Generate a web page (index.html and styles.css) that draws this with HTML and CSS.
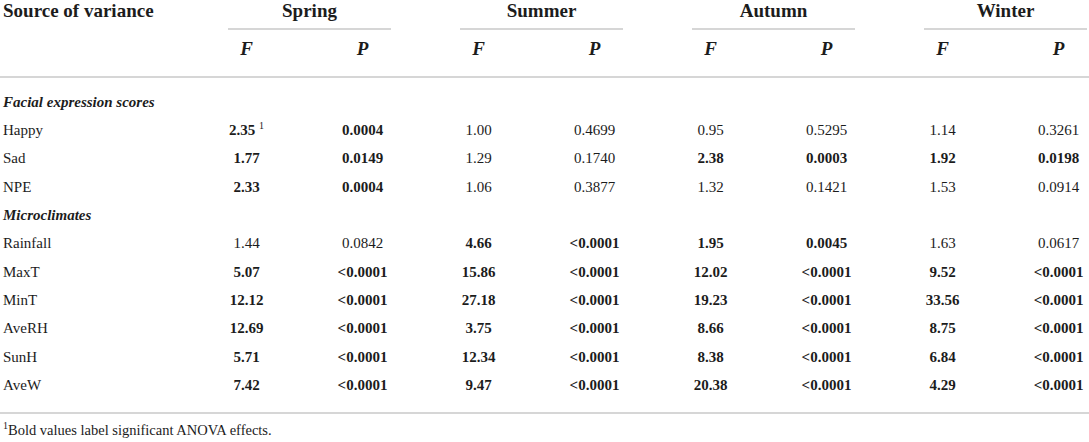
FILE: index.html
```html
<!DOCTYPE html>
<html lang="en">
  <head>
    <meta charset="UTF-8" />
    <meta name="viewport" content="width=device-width, initial-scale=1.0" />
    <title>ANOVA - seasons</title>
    <link rel="stylesheet" href="styles.css">
  </head>
  <body>
    <table class="anova">
      <colgroup>
        <col class="col_src" />
        <col class="col_val" span="8" />
      </colgroup>
      <thead>
        <tr class="season_row">
          <th class="src" rowspan="2">Source of variance</th>
          <th class="season" colspan="2"><div>Spring</div></th>
          <th class="season" colspan="2"><div>Summer</div></th>
          <th class="season" colspan="2"><div>Autumn</div></th>
          <th class="season" colspan="2"><div>Winter</div></th>
        </tr>
        <tr class="stat_row">
          <th>F</th><th>P</th>
          <th>F</th><th>P</th>
          <th>F</th><th>P</th>
          <th>F</th><th>P</th>
        </tr>
      </thead>
      <tbody>
        <tr class="group">
          <td colspan="9">Facial expression scores</td>
        </tr>
        <tr>
          <td>Happy</td>
          <td class="sig">2.35 <sup>1</sup></td><td class="sig">0.0004</td>
          <td>1.00</td><td>0.4699</td>
          <td>0.95</td><td>0.5295</td>
          <td>1.14</td><td>0.3261</td>
        </tr>
        <tr>
          <td>Sad</td>
          <td class="sig">1.77</td><td class="sig">0.0149</td>
          <td>1.29</td><td>0.1740</td>
          <td class="sig">2.38</td><td class="sig">0.0003</td>
          <td class="sig">1.92</td><td class="sig">0.0198</td>
        </tr>
        <tr>
          <td>NPE</td>
          <td class="sig">2.33</td><td class="sig">0.0004</td>
          <td>1.06</td><td>0.3877</td>
          <td>1.32</td><td>0.1421</td>
          <td>1.53</td><td>0.0914</td>
        </tr>
        <tr class="group">
          <td colspan="9">Microclimates</td>
        </tr>
        <tr>
          <td>Rainfall</td>
          <td>1.44</td><td>0.0842</td>
          <td class="sig">4.66</td><td class="sig">&lt;0.0001</td>
          <td class="sig">1.95</td><td class="sig">0.0045</td>
          <td>1.63</td><td>0.0617</td>
        </tr>
        <tr class="sig_row">
          <td>MaxT</td>
          <td>5.07</td><td>&lt;0.0001</td>
          <td>15.86</td><td>&lt;0.0001</td>
          <td>12.02</td><td>&lt;0.0001</td>
          <td>9.52</td><td>&lt;0.0001</td>
        </tr>
        <tr class="sig_row">
          <td>MinT</td>
          <td>12.12</td><td>&lt;0.0001</td>
          <td>27.18</td><td>&lt;0.0001</td>
          <td>19.23</td><td>&lt;0.0001</td>
          <td>33.56</td><td>&lt;0.0001</td>
        </tr>
        <tr class="sig_row">
          <td>AveRH</td>
          <td>12.69</td><td>&lt;0.0001</td>
          <td>3.75</td><td>&lt;0.0001</td>
          <td>8.66</td><td>&lt;0.0001</td>
          <td>8.75</td><td>&lt;0.0001</td>
        </tr>
        <tr class="sig_row">
          <td>SunH</td>
          <td>5.71</td><td>&lt;0.0001</td>
          <td>12.34</td><td>&lt;0.0001</td>
          <td>8.38</td><td>&lt;0.0001</td>
          <td>6.84</td><td>&lt;0.0001</td>
        </tr>
        <tr class="sig_row last">
          <td>AveW</td>
          <td>7.42</td><td>&lt;0.0001</td>
          <td>9.47</td><td>&lt;0.0001</td>
          <td>20.38</td><td>&lt;0.0001</td>
          <td>4.29</td><td>&lt;0.0001</td>
        </tr>
      </tbody>
    </table>
    <p class="note"><sup>1</sup>Bold values label significant ANOVA effects.</p>
  </body>
</html>
```

FILE: styles.css
```css
body {
  margin: 0;
  font-family: "Liberation Serif", "Times New Roman", serif;
  color: #1c1c1c;
  background-color: white;
}

.anova {
  width: 1089px;
  table-layout: fixed;
  border-collapse: separate;
  border-spacing: 0;
  border-bottom: 2px solid #d6d6d6;
}
.col_src {
  width: 161px;
}
.col_val {
  width: 116px;
}

/* header */
.anova th {
  font-size: 19px;
  line-height: 22px;
  font-weight: bold;
  padding: 0;
}
.src {
  text-align: left;
  vertical-align: top;
  padding-left: 3px !important;
  border-bottom: 2px solid #d6d6d6;
}
.season div {
  margin: 0 2px 0 67px;
  padding-bottom: 6px;
  border-bottom: 2px solid #d6d6d6;
  text-align: center;
}
.stat_row th {
  font-style: italic;
  text-align: center;
  padding: 8px 0 16px 55px;
  border-bottom: 2px solid #d6d6d6;
}

/* body */
.anova td {
  font-size: 15px;
  height: 28.35px;
  line-height: 28.35px;
  padding: 0 0 0 55px;
  text-align: center;
  white-space: nowrap;
}
.anova td:first-child {
  text-align: left;
  padding-left: 3px;
}
.group td {
  font-weight: bold;
  font-style: italic;
}
tbody tr:first-child td {
  padding-top: 9.5px;
}
.last td {
  padding-bottom: 13px;
}
.sig,
.sig_row td {
  font-weight: bold;
}
.sig_row td:first-child {
  font-weight: normal;
}
sup {
  font-size: 10px;
  line-height: 0;
  font-weight: normal;
}

.note {
  margin: 6px 0 0 0;
  padding-left: 3px;
  font-size: 14.5px;
  line-height: 20px;
}
.note sup {
  font-size: 10px;
}
```
